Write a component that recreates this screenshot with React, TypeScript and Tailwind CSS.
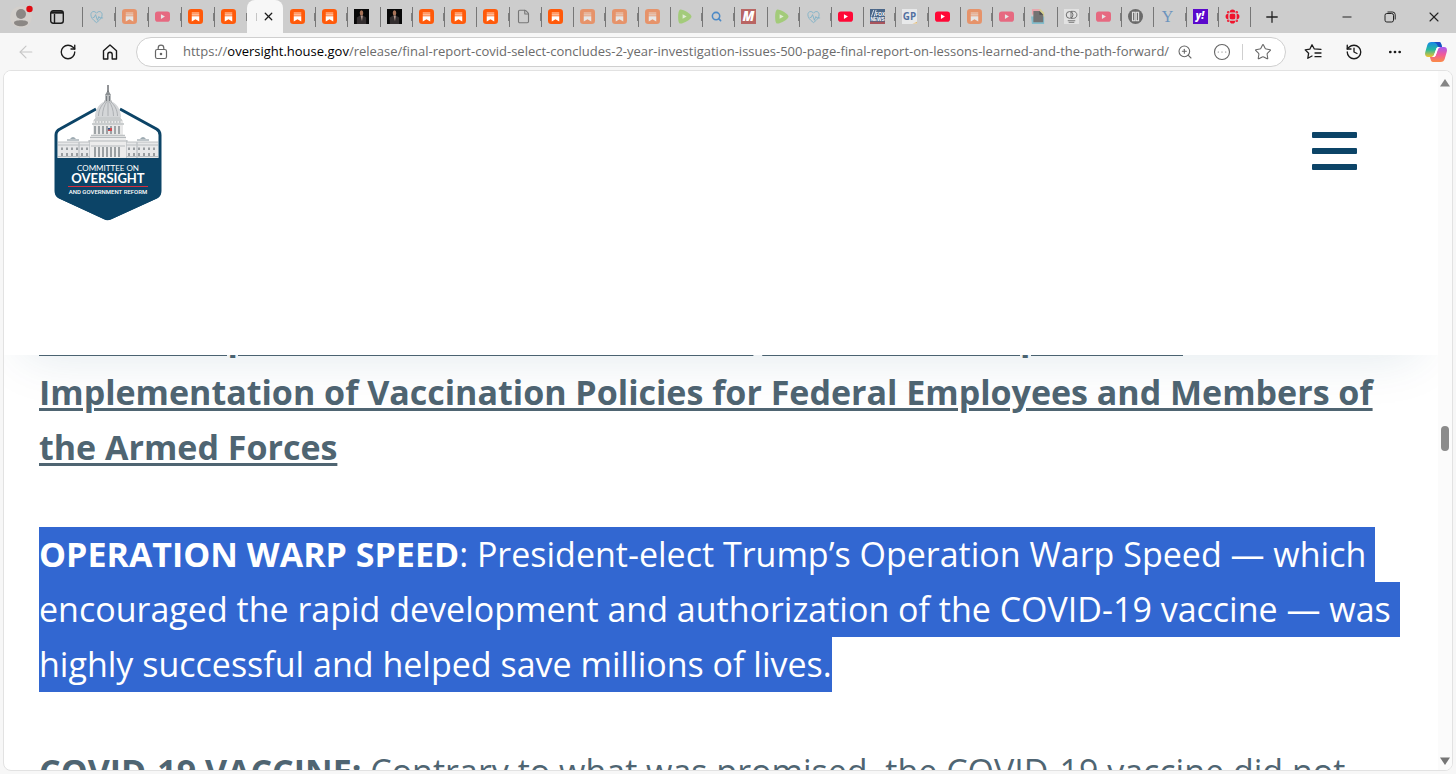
import React from "react";
import { File, Search, X, Plus, Minus, ArrowLeft, RotateCw, ZoomIn, Star, History, Ellipsis, CircleEllipsis } from "lucide-react";

type Kind =
  | "sub" | "subFaded" | "yt" | "ytFaded" | "heart" | "man" | "file" | "rumble" | "search" | "m"
  | "fox" | "gp" | "docs" | "qd" | "pause" | "y" | "yahoo" | "cbc";

const leading: Kind[] = ["heart", "subFaded", "ytFaded", "sub", "sub"];
const trailing: Kind[] = [
  "sub", "sub", "man", "man", "sub", "sub", "sub", "file", "sub", "subFaded", "subFaded", "subFaded",
  "rumble", "search", "m", "rumble", "heart", "yt", "fox", "gp", "yt", "subFaded", "ytFaded", "docs",
  "qd", "ytFaded", "pause", "y", "yahoo", "cbc",
];

const names: Record<Kind, string> = {
  sub: "Substack", subFaded: "Substack", yt: "YouTube", ytFaded: "YouTube", heart: "Health", man: "Profile",
  file: "Document", rumble: "Rumble", search: "Search", m: "Magazine", fox: "Fox News", gp: "Gateway",
  docs: "Docs", qd: "Journal", pause: "Media", y: "Y", yahoo: "Yahoo", cbc: "CBC",
};

function Favicon({ kind }: { kind: Kind }) {
  if (kind === "file") return <File className="h-[17px] w-[15px] shrink-0 text-[#777]" strokeWidth={1.8} />;
  if (kind === "search") return <Search className="size-[15px] shrink-0 p-[2px] text-[#4d8ac6]" strokeWidth={3.4} />;
  const faded = kind === "subFaded" || kind === "ytFaded";
  return (
    <svg viewBox="0 0 16 16" className={faded ? "size-[15px] shrink-0 opacity-50" : "size-[15px] shrink-0"} aria-hidden="true">
      {(kind === "sub" || kind === "subFaded") && (
        <>
          <rect width="16" height="16" rx="3.5" fill="#ff5a0a" />
          <path d="M4 3.6h8v1.3H4zM4 5.7h8v1.2H4z" fill="#ffd9c4" />
          <path d="M4 7.6h8v5.8L8 10.9l-4 2.5z" fill="#fff" />
        </>
      )}
      {(kind === "yt" || kind === "ytFaded") && (
        <>
          <rect y="2.6" width="16" height="11" rx="3" fill="#ff0836" />
          <path d="M6.3 5.6v5L10.6 8z" fill="#fff" />
        </>
      )}
      {kind === "heart" && (
        <path d="M8 14.500C4 11.500 2 9 2 6c0-3.500 4-4.500 6-1.500C10 1.500 14 2.500 14 6c0 3-2 5.500-6 8.500M4 9h1.500L7 6l2 6 1.500-4 1 1.500H15" fill="none" stroke="#7aafc6" strokeWidth=".9" />
      )}
      {kind === "man" && (
        <>
          <rect width="16" height="16" fill="#080808" />
          <path d="M3 16V9l3.500-2h3L13 9v7z" fill="#332e2f" />
          <path d="M7 7h2.500L8.500 13z" fill="#b59b92" />
          <ellipse cx="8" cy="4.200" rx="1.900" ry="2.800" fill="#a77358" />
        </>
      )}
      {kind === "rumble" && (
        <>
          <path d="M3 .8C.8 2 .6 13 2.500 15.200c2 2 13-4 13-7.200C15.500 5 5-.5 3 .8z" fill="#a3cb7a" />
          <path d="M6 5.500v5L10.300 8z" fill="#e1ecd4" />
        </>
      )}
      {kind === "m" && (
        <>
          <rect width="16" height="16" fill="#b96563" />
          <text x="8" y="13" textAnchor="middle" fontFamily="Open Sans, sans-serif" fontWeight="800" fontStyle="italic" fontSize="14" fill="#fff">M</text>
        </>
      )}
      {kind === "fox" && (
        <>
          <rect width="16" height="16" fill="#4a6688" />
          <path d="M0 13.500h16V16H0z" fill="#a9545c" />
          <path d="M1.500 8 4 1M4.500 8l2-7" stroke="#dfe5ec" />
          <text x="11" y="7" textAnchor="middle" fontFamily="Liberation Sans, sans-serif" fontWeight="700" fontSize="5" fill="#fff">FOX</text>
          <text x="8" y="12.800" textAnchor="middle" fontFamily="Liberation Sans, sans-serif" fontWeight="700" fontSize="5" fill="#fff">NEWS</text>
        </>
      )}
      {kind === "gp" && (
        <>
          <rect width="16" height="16" fill="#e8e9ea" />
          <text x="8" y="11.800" textAnchor="middle" fontFamily="Open Sans, sans-serif" fontWeight="700" fontSize="10.500" fill="#52709f">GP</text>
          <path d="M9 15.500c3 0 5-1 7-2v2z" fill="#e5ba6f" />
        </>
      )}
      {kind === "docs" && (
        <>
          <path d="M1 0h9v6H1z" fill="#e8a5ad" />
          <path d="M9 0h1l4 4v6H9z" fill="#d5cf91" />
          <path d="M0 8h14v8H1z" fill="#83bdcc" />
          <path d="M2.500 2H9l4 4v8H2.500z" fill="#737373" />
          <path d="M9 2l4 4H9z" fill="#4f4f4f" />
        </>
      )}
      {kind === "qd" && (
        <>
          <rect width="16" height="16" fill="#e2e2e2" />
          <circle cx="6" cy="6.300" r="3.600" fill="none" stroke="#666" />
          <path d="M7.500 2.500h2.500c5 0 5 7.500 0 7.500H7.500zM4 12.500h8M5 14.200h6" fill="none" stroke="#666" strokeWidth=".9" />
        </>
      )}
      {kind === "pause" && (
        <>
          <circle cx="8" cy="8" r="8" fill="#6a6a6a" />
          <path d="M4.800 3.500h2.500v9H4.800zM8.800 3.500h2.500v9H8.800z" fill="none" stroke="#e2e2e2" strokeWidth="1.200" />
        </>
      )}
      {kind === "y" && (
        <text x="8" y="13.500" textAnchor="middle" fontFamily="Liberation Serif, serif" fontSize="17" fill="#6b93bd">Y</text>
      )}
      {kind === "yahoo" && (
        <>
          <rect width="16" height="16" fill="#5b08cc" />
          <text x="7.500" y="11" textAnchor="middle" fontFamily="Open Sans, sans-serif" fontWeight="800" fontStyle="italic" fontSize="10.500" fill="#fff">y!</text>
        </>
      )}
      {kind === "cbc" && (
        <g fill="#f0142c">
          <circle cx="8" cy="8" r="3.400" />
          <path d="M5 3.600a3 3 0 0 1 6 0zM5 12.400a3 3 0 0 0 6 0zM3.600 5a3 3 0 0 0 0 6zM12.400 5a3 3 0 0 1 0 6z" />
          <circle cx="3.600" cy="3.600" r="1.500" /><circle cx="12.400" cy="3.600" r="1.500" />
          <circle cx="3.600" cy="12.400" r="1.500" /><circle cx="12.400" cy="12.400" r="1.500" />
          <path d="M4.600 0v16M11.400 0v16M0 4.600h16M0 11.400h16" stroke="#cecece" strokeWidth=".6" />
        </g>
      )}
    </svg>
  );
}

function Tab({ kind, first, grow, mark }: { kind: Kind; first?: boolean; grow?: boolean; mark?: boolean }) {
  return (
    <button
      aria-label={names[kind]}
      className={`flex h-full items-center ${grow ? "min-w-0 flex-1" : "w-[33px] shrink-0"}`}
    >
      <span className={`h-5 w-px shrink-0 ${first ? "bg-transparent" : "bg-[#777]"}`} />
      <span className="flex flex-1 pl-[6px]">
        <Favicon kind={kind} />
      </span>
      <span className={`h-2 w-px shrink-0 ${mark ? "bg-[#7f7f7f]" : "bg-transparent"}`} />
    </button>
  );
}

function TabStrip() {
  return (
    <div className="flex h-[33px] shrink-0 items-center bg-[#cdcdcd]">
      <button aria-label="Profile" className="flex w-[42px] shrink-0 justify-center">
        <svg viewBox="0 0 24 24" className="size-6">
          <circle cx="12" cy="12" r="10.800" fill="#d3cfcb" />
          <circle cx="12" cy="9" r="5" fill="#8b8784" />
          <path d="M5 17.500c0-3 14-3 14 0 0 5-14 5-14 0z" fill="#8b8784" />
          <circle cx="20.500" cy="4" r="3.200" fill="#e00b12" />
        </svg>
      </button>
      <button aria-label="Tab actions" className="flex w-[30px] shrink-0 justify-center">
        <svg viewBox="0 0 16 16" className="size-4" fill="none" stroke="#1b1b1b" strokeWidth="1.400">
          <rect x="1.700" y="1.700" width="12.600" height="12.600" rx="2.500" />
          <path d="M2 3.500h12" strokeWidth="2.400" />
          <path d="M5.500 5v9" />
        </svg>
      </button>
      <div className="ml-[10px] flex h-full shrink-0">
        {leading.map((k, i) => <Tab key={i} kind={k} mark />)}
      </div>
      <div className="flex h-full w-9 shrink-0 items-center justify-center rounded-t-lg bg-[#f7f7f7]">
        <span className="mr-[5px] h-2 w-px bg-[#c5c5c5]" />
        <button aria-label="Close tab"><X className="size-[13px] text-[#1b1b1b]" strokeWidth={2.4} /></button>
      </div>
      <div className="flex h-full min-w-0 flex-1">
        {trailing.map((k, i) => <Tab key={i} kind={k} first={i === 0} grow mark={i % 3 !== 2} />)}
      </div>
      <span className="h-5 w-px bg-[#777]" />
      <div className="flex w-[205px] shrink-0 items-center">
        <button aria-label="New tab" className="flex w-[41px] justify-center"><Plus className="size-[18px] text-[#222]" strokeWidth={1.7} /></button>
        <div className="ml-auto flex items-center text-[#222]">
          <button aria-label="Minimize" className="flex w-[43px] justify-center"><Minus className="size-[14px]" strokeWidth={1.7} /></button>
          <button aria-label="Restore" className="flex w-11 justify-center">
            <svg viewBox="0 0 12 12" className="size-3" fill="none" stroke="currentColor">
              <rect x="1" y="2.500" width="8.500" height="8.500" rx="1.800" />
              <path d="M3.500 1h5A2.700 2.700 0 0 1 11.200 3.500v5" />
            </svg>
          </button>
          <button aria-label="Close" className="flex w-11 justify-center"><X className="size-4" strokeWidth={1.6} /></button>
        </div>
      </div>
    </div>
  );
}

const toolIcon = "flex h-10 w-[41px] shrink-0 items-center justify-center text-[#1b1b1b]";

function Toolbar() {
  return (
    <div className="flex h-[37px] shrink-0 items-center bg-[#f7f7f7] pl-[6px]">
      <button aria-label="Back" className="flex w-10 shrink-0 justify-center text-[#c6c6c6]"><ArrowLeft className="size-5" strokeWidth={1.3} /></button>
      <button aria-label="Refresh" className="flex w-11 shrink-0 justify-center text-[#1b1b1b]"><RotateCw className="size-[18px]" strokeWidth={1.8} /></button>
      <button aria-label="Home" className="flex w-10 shrink-0 justify-center text-[#1b1b1b]">
        <svg viewBox="0 0 18 18" className="size-[18px]" fill="none" stroke="currentColor" strokeWidth="1.400" strokeLinejoin="round">
          <path d="M2.500 7.800 9 2l6.500 5.800V16h-4.300v-4.500a2.200 2.200 0 0 0-4.400 0V16H2.500z" />
        </svg>
      </button>
      <div className="ml-[6px] flex h-[30px] min-w-0 flex-1 items-center rounded-full border border-[#cfcfcf] bg-white pr-[2px] pl-4 text-[#666]">
        <svg viewBox="0 0 16 16" className="size-4 shrink-0" fill="none" stroke="currentColor" strokeWidth="1.200">
          <rect x="2.500" y="5.500" width="11" height="9" rx="1.800" />
          <path d="M5.200 5.500V4a2.800 2.800 0 0 1 5.600 0v1.500" />
          <circle cx="8" cy="10" r=".7" fill="currentColor" />
        </svg>
        <a href="https://oversight.house.gov/" className="ml-[14px] min-w-0 flex-1 font-['Open_Sans',sans-serif] text-[13px] whitespace-nowrap text-[#6b6b6b]">
          https://<span className="text-black">oversight.house.gov</span>/release/final-report-covid-select-concludes-2-year-investigation-issues-500-page-final-report-on-lessons-learned-and-the-path-forward/
        </a>
        <button aria-label="Zoom" className="flex w-[34px] shrink-0 justify-center"><ZoomIn className="size-4" strokeWidth={1.6} /></button>
        <button aria-label="More site actions" className="flex w-10 shrink-0 justify-center"><CircleEllipsis className="size-[18px]" strokeWidth={1.5} /></button>
        <span className="h-4 w-px shrink-0 bg-[#cfcfcf]" />
        <button aria-label="Add to favorites" className="flex w-10 shrink-0 justify-center"><Star className="size-[18px]" strokeWidth={1.4} /></button>
      </div>
      <div className="flex shrink-0 items-center pl-[6px]">
        <button aria-label="Favorites" className={toolIcon}>
          <svg viewBox="0 0 18 18" className="size-[18px]" fill="none" stroke="currentColor" strokeWidth="1.300" strokeLinejoin="round" strokeLinecap="round">
            <path d="M10.200 5.800 8 1.800 5.800 6.200 1.200 6.900l3.400 3.400-.8 5L8 13M10.200 5.800 17 6.300M11 10h6M11 13.700h6" />
          </svg>
        </button>
        <button aria-label="History" className={toolIcon}><History className="size-[18px]" strokeWidth={1.8} /></button>
        <button aria-label="Settings and more" className={toolIcon}><Ellipsis className="size-4" strokeWidth={2.1} /></button>
        <button aria-label="Copilot" className={toolIcon}>
          <svg viewBox="0 0 22 20" className="h-5 w-[22px]">
            <defs>
              <linearGradient id="cl" x1="0" y1="0" x2="0" y2="1"><stop stopColor="#1588e8" /><stop offset=".5" stopColor="#25b9a0" /><stop offset="1" stopColor="#f5c22c" /></linearGradient>
              <linearGradient id="cr" x1="0" y1="0" x2="0" y2="1"><stop stopColor="#a65af0" /><stop offset=".5" stopColor="#f05a9b" /><stop offset="1" stopColor="#fb8b45" /></linearGradient>
            </defs>
            <path d="M6.500 0H14c1.500 0 2 1 2.500 3l.6 2H14c-2 0-2.600 1-3 2.500L9 13c-.5 1.500-1.500 2-3 2H3c-2.500 0-3.500-2-2.700-5l2-7C3 1 4 0 6.500 0z" fill="url(#cl)" />
            <path d="M15.500 20H8c-1.500 0-2-1-2.500-3l-.6-2H8c2 0 2.600-1 3-2.500L13 7c.5-1.500 1.500-2 3-2h3c2.500 0 3.500 2 2.700 5l-2 7c-.7 2-1.700 3-4.200 3z" fill="url(#cr)" />
            <path d="M8.500 0H14c1.500 0 2 1 2.500 3l.6 2h-3C12 4.500 13 1 8.500 0z" fill="#1b4fc4" />
            <path d="M11.800 5.800Q12.500 5 14 5h1.500q-1.800.5-2.500 2l-2.300 6.500Q10 15 8 15H6.500Q8.500 14.500 9 13z" fill="#fff" />
          </svg>
        </button>
      </div>
    </div>
  );
}

const columns = [55, 59, 63, 67, 71, 75, 79];
const leftWindows = [22, 27, 32, 37, 42, 47];
const rightWindows = [89, 94, 99, 104, 109, 114];

function Logo() {
  return (
    <svg viewBox="0 0 140 150" className="h-[150px] w-[140px]" role="img" aria-label="Committee on Oversight and Government Reform">
      <path d="M56 33 20 53Q16 55 16 59v56q0 4 3.500 6l45 21q3 1.500 6 0l46-21q3.500-2 3.500-6V59q0-4-3.500-6L80 33" fill="#fff" stroke="#0c4467" strokeWidth="3" />
      <path d="M15 82h106v34q0 4-4 6.500L72 143q-4 2-8 0L19 122.500q-4-2.500-4-6.500z" fill="#0c4467" />
      <g>
        <rect x="18" y="66" width="100" height="16" fill="#e7e8e9" />
        <path d="M18 66h100M18 69h100M18 80.500h100" stroke="#aeb2b5" strokeWidth=".8" />
        <path d="M27 65v-2h12v2zM97 65v-2h12v2z" fill="#bfc6ca" />
        <path d="M30 63q3-4 6 0M100 63q3-4 6 0" fill="#9eabb2" />
        {leftWindows.concat(rightWindows).map((x) => (
          <path key={x} d={`M${x} 71.500v2.500M${x} 77v3`} stroke="#6f767b" strokeWidth="1.300" />
        ))}
        <path d="M39 66v16M50 64v18M86 64v18M97 66v16" stroke="#c1c4c7" strokeWidth="1.500" />
        <rect x="50" y="60" width="36" height="22" fill="#ececec" />
        <path d="M50 61.500h36M48 65h40M51 70h34" stroke="#b5b9bc" strokeWidth="1" />
        {columns.map((x) => (
          <path key={x} d={`M${x} 71v10`} stroke="#868c90" strokeWidth="1.600" />
        ))}
        <path d="M53 44h30v15H53z" fill="#e8e8e8" />
        {columns.map((x) => (
          <path key={x} d={`M${x} 50v8`} stroke="#8b9195" strokeWidth="1.600" />
        ))}
        <path d="M51 59.500h34M52 48h32M54 44h28" stroke="#bfc2c4" strokeWidth="1.500" />
        <path d="M54 45h28l-2-5H56z" fill="#c9cccd" />
        <path d="M55 46h26" stroke="#9da2a5" strokeWidth="1" strokeDasharray="1.5 1.5" />
        <path d="M55 41c0-8 5-14 9.500-15.500h7C76 27 81 33 81 41z" fill="#d4d6d8" />
        <path d="M58.500 40c0-6 3-11 6.500-14M62.500 40c0-6 2-11 4-14M68 40V26M73.500 40c0-6-2-11-4-14M77.500 40c0-6-3-11-6.500-14" fill="none" stroke="#a8acaf" strokeWidth=".9" />
        <path d="M64 26h8v-1.500h-1V19h-6v5.500h-1z" fill="#b9bcbe" />
        <path d="M66.500 20v5M69.500 20v5" stroke="#6f757a" strokeWidth=".9" />
        <path d="m65 19 3-5 3 5z" fill="#8b9093" />
        <path d="M68 9v7" stroke="#6e7174" strokeWidth="1.500" />
        <path d="M68 52h4v3h-4z" fill="#cf4a50" /><path d="M68 52h2v1.600h-2z" fill="#355c91" />
      </g>
      <text x="68" y="94.500" textAnchor="middle" fontFamily="Lato, sans-serif" fontSize="8" fill="#fff">COMMITTEE ON</text>
      <text x="68" y="107" textAnchor="middle" fontFamily="Lato, sans-serif" fontWeight="700" fontSize="13" fill="#fff">OVERSIGHT</text>
      <path d="M28 110.500h80" stroke="#d52d3d" strokeWidth="1" />
      <text x="68" y="118" textAnchor="middle" fontFamily="Roboto, sans-serif" fontWeight="500" fontSize="6" fill="#fff">AND GOVERNMENT REFORM</text>
    </svg>
  );
}

const selected = "block w-fit bg-[#3267d1] whitespace-nowrap";
const link = "underline decoration-[3px] underline-offset-[3px]";

export default function App() {
  return (
    <div className="flex h-screen flex-col overflow-hidden bg-[#f7f7f7] font-['Open_Sans',sans-serif]">
      <TabStrip />
      <Toolbar />
      <div className="mr-[3px] mb-[3px] ml-[3px] flex min-h-0 flex-1 overflow-hidden rounded-lg border border-[#e2e2e2] bg-white">
        <main className="min-w-0 flex-1 overflow-hidden">
          <header className="relative z-10 flex h-[284px] items-start justify-between bg-white pr-[81px] pl-9 shadow-[0_20px_50px_-20px_rgba(12,68,103,0.13)]">
            <a href="#home" className="mt-[5px]"><Logo /></a>
            <button aria-label="Open menu" className="mt-[61px] flex w-[45px] flex-col gap-[10px]">
              <span className="h-[6px] rounded-[1px] bg-[#0c4467]" />
              <span className="h-[6px] rounded-[1px] bg-[#0c4467]" />
              <span className="h-[6px] rounded-[1px] bg-[#0c4467]" />
            </button>
          </header>
          <article className="-mt-[45px] flex flex-col gap-[52px] pl-[35px] text-[34px] leading-[55px] text-[#4f6572]">
            <p className="font-bold whitespace-nowrap">
              <a href="#report" className={link}>Internal Report: The Biden Administration</a>{" "}
              <a href="#policies" className={link}>
                Coronavirus Reports and
                <br />
                Implementation of Vaccination Policies for Federal Employees and Members of
                <br />
                the Armed Forces
              </a>
            </p>
            <p className="text-white">
              <span className={`${selected} pr-[9px]`}><strong>OPERATION WARP SPEED</strong>: President-elect Trump’s Operation Warp Speed — which</span>
              <span className={`${selected} pr-[9px]`}>encouraged the rapid development and authorization of the COVID-19 vaccine — was</span>
              <span className={selected}>highly successful and helped save millions of lives.</span>
            </p>
            <p className="whitespace-nowrap"><strong>COVID-19 VACCINE:</strong> Contrary to what was promised, the COVID-19 vaccine did not</p>
          </article>
        </main>
        <div className="flex w-[14px] shrink-0 flex-col items-center bg-[#fbfbfb] pt-2 pb-[5px]">
          <svg viewBox="0 0 10 8" className="h-2 w-[10px]"><path d="M5 0 10 7.500H0z" fill="#858585" /></svg>
          <span className="mt-[339px] h-[25px] w-2 rounded-full bg-[#8b8b8b]" />
          <svg viewBox="0 0 10 8" className="mt-auto h-2 w-[10px]"><path d="M0 .5h10L5 8z" fill="#757575" /></svg>
        </div>
      </div>
    </div>
  );
}
